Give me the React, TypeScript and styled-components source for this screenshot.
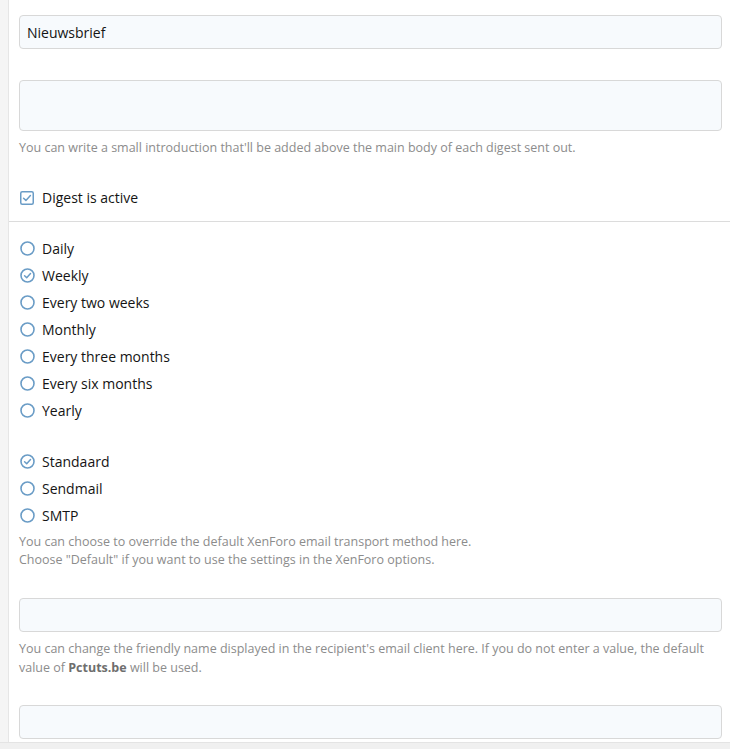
import { createGlobalStyle, styled } from 'styled-components';

const GlobalStyle = createGlobalStyle`
  html, body {
    margin: 0;
    padding: 0;
    background: #fff;
  }
  body {
    font-family: 'Open Sans', 'Noto Sans', sans-serif;
    color: #141414;
  }
`;

const frequencies = [
  { label: 'Daily', checked: false },
  { label: 'Weekly', checked: true },
  { label: 'Every two weeks', checked: false },
  { label: 'Monthly', checked: false },
  { label: 'Every three months', checked: false },
  { label: 'Every six months', checked: false },
  { label: 'Yearly', checked: false }
];

const transports = [
  { label: 'Standaard', checked: true },
  { label: 'Sendmail', checked: false },
  { label: 'SMTP', checked: false }
];

const RadioIcon = ({ checked }: { checked: boolean }) => (
  <svg width='15' height='15' viewBox='0 0 15 15'>
    <circle cx='7.5' cy='7.5' r='6.5' fill='#fff' stroke='#6a9cc6' strokeWidth='1.6' />
    {checked ? (
      <path d='M4.6 7.7 L6.7 9.7 L10.5 5.6' fill='none' stroke='#6a9cc6' strokeWidth='1.5' strokeLinecap='round' strokeLinejoin='round' />
    ) : null}
  </svg>
);

const CheckIcon = () => (
  <svg width='14' height='14' viewBox='0 0 14 14'>
    <rect x='0.75' y='0.75' width='12.5' height='12.5' rx='1.5' fill='#fff' stroke='#6a9cc6' strokeWidth='1.5' />
    <path d='M3.6 7.2 L5.9 9.4 L10.4 4.6' fill='none' stroke='#6a9cc6' strokeWidth='1.5' strokeLinecap='round' strokeLinejoin='round' />
  </svg>
);

const Option = ({ label, checked }: { label: string; checked: boolean }) => (
  <OptionRow>
    <IconBox>
      <RadioIcon checked={checked} />
    </IconBox>
    <span>{label}</span>
  </OptionRow>
);

const App = () => {
  return (
    <>
      <GlobalStyle />
      <Shell>
        <Gutter />
        <Content>
          <Block $top={15}>
            <TextInput>Nieuwsbrief</TextInput>
            <TextArea />
            <Hint $gap={8}>
              You can write a small introduction that'll be added above the main body of each digest sent out.
            </Hint>
            <OptionRow $gap={27}>
              <IconBox>
                <CheckIcon />
              </IconBox>
              <span>Digest is active</span>
            </OptionRow>
          </Block>
          <Divider />
          <Block $top={13}>
            <OptionList>
              {frequencies.map((f) => (
                <Option key={f.label} label={f.label} checked={f.checked} />
              ))}
            </OptionList>
            <OptionList $gap={24}>
              {transports.map((t) => (
                <Option key={t.label} label={t.label} checked={t.checked} />
              ))}
            </OptionList>
            <Hint $gap={4}>
              You can choose to override the default XenForo email transport method here.
              <br />
              Choose "Default" if you want to use the settings in the XenForo options.
            </Hint>
            <TextInput $gap={29} />
            <Hint $gap={7} $tight>
              You can change the friendly name displayed in the recipient's email client here. If you do not enter a
              value, the default
              <br />
              value of <b>Pctuts.be</b> will be used.
            </Hint>
            <TextInput $gap={28} />
          </Block>
        </Content>
      </Shell>
      <Footer />
    </>
  );
};

export default App;

const Shell = styled.div`
  display: flex;
  height: 742px;
  overflow: hidden;
`;

const Gutter = styled.div`
  width: 8px;
  flex-shrink: 0;
  background: #f5f5f5;
  border-right: 1px solid #e6e6e6;
`;

const Content = styled.div`
  flex: 1;
  display: flex;
  flex-direction: column;
`;

const Block = styled.div<{ $top: number }>`
  display: flex;
  flex-direction: column;
  padding: ${(p) => p.$top}px 8px 0 10px;
`;

const TextInput = styled.div<{ $gap?: number }>`
  box-sizing: border-box;
  height: 34px;
  margin-top: ${(p) => p.$gap ?? 0}px;
  padding: 0 7px;
  display: flex;
  align-items: center;
  background: #f7fafd;
  border: 1px solid #d8d8d8;
  border-radius: 4px;
  font-size: 14px;
  color: #141414;
`;

const TextArea = styled.div`
  box-sizing: border-box;
  height: 51px;
  margin-top: 31px;
  background: #f7fafd;
  border: 1px solid #d8d8d8;
  border-radius: 4px;
`;

const Hint = styled.div<{ $gap: number; $tight?: boolean }>`
  margin-top: ${(p) => p.$gap}px;
  font-size: 12.5px;
  line-height: ${(p) => (p.$tight ? 19 : 18)}px;
  white-space: ${(p) => (p.$tight ? 'nowrap' : 'normal')};
  color: #8c8c8c;

  b {
    color: #6e6e6e;
    font-weight: 700;
  }
`;

const Divider = styled.div`
  margin-top: 10px;
  height: 1px;
  background: #dcdcdc;
`;

const OptionList = styled.div<{ $gap?: number }>`
  display: flex;
  flex-direction: column;
  margin-top: ${(p) => p.$gap ?? 0}px;
`;

const OptionRow = styled.div<{ $gap?: number }>`
  display: flex;
  align-items: center;
  height: 27px;
  margin-top: ${(p) => p.$gap ?? 0}px;
  font-size: 14px;
  color: #141414;
`;

const IconBox = styled.span`
  display: flex;
  width: 22px;
  padding-left: 1px;
  align-items: center;
`;

const Footer = styled.div`
  height: 7px;
  background: #f0f0f0;
  border-top: 1px solid #e4e4e4;
`;
